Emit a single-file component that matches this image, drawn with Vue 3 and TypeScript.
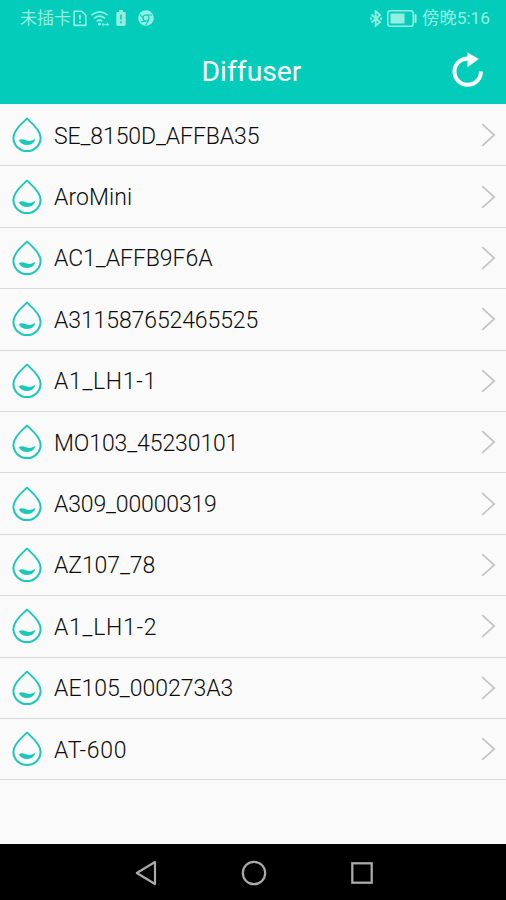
<script setup lang="ts">
interface Device {
  name: string
  spacing: number
}

const devices: Device[] = [
  { name: 'SE_8150D_AFFBA35', spacing: -0.1 },
  { name: 'AroMini', spacing: 0.1 },
  { name: 'AC1_AFFB9F6A', spacing: -0.05 },
  { name: 'A311587652465525', spacing: -0.1 },
  { name: 'A1_LH1-1', spacing: 0.65 },
  { name: 'MO103_45230101', spacing: -0.1 },
  { name: 'A309_00000319', spacing: -0.15 },
  { name: 'AZ107_78', spacing: -0.1 },
  { name: 'A1_LH1-2', spacing: 0.7 },
  { name: 'AE105_000273A3', spacing: 0 },
  { name: 'AT-600', spacing: 0.7 },
]
</script>

<template>
  <div class="screen">
    <header class="top">
      <div class="status">
        <div class="status-left">
          <span class="carrier">未插卡</span>
          <svg class="sim" width="14" height="17" viewBox="0 0 14 17">
            <path d="M1.2 1.2h7.6l4 4v10.2H1.2z" fill="none" stroke="currentColor" stroke-width="1.6" stroke-linejoin="round" />
            <path d="M7 5v4.5M7 11.3v1.8" stroke="currentColor" stroke-width="1.8" />
          </svg>
          <svg class="wifi" width="20" height="17" viewBox="0 0 20 17">
            <path d="M1.3 5.2Q9.5-1.6 17.7 5.2M4 8.3q5.5-4.4 11 0M6.7 11.3q2.8-2.2 5.6 0" fill="none" stroke="currentColor" stroke-width="1.7" />
            <circle cx="9.5" cy="14" r="1.6" fill="currentColor" />
            <path d="M12.5 14.6h6M13.8 12.8l-1.6 1.8 1.6 1.6M17 12.8l1.6 1.8-1.6 1.6" fill="none" stroke="currentColor" />
          </svg>
          <svg class="cell" width="10" height="16" viewBox="0 0 10 17">
            <path d="M3 0h4v2h1.5Q10 2 10 3.5v12Q10 17 8.5 17h-7Q0 17 0 15.5v-12Q0 2 1.5 2H3z" fill="currentColor" />
            <path d="M5 5v5M5 12v2" stroke="#04ccbb" stroke-width="1.7" />
          </svg>
          <svg class="globe" width="16" height="16" viewBox="0 0 16 16">
            <circle cx="8" cy="8" r="7.8" fill="currentColor" />
            <circle cx="8" cy="8" r="3" fill="none" stroke="#04ccbb" stroke-width="1.1" />
            <path d="M2 4.5 5 8M8 5h6M10.5 10 8 15M8 11 3 12" fill="none" stroke="#04ccbb" stroke-width="1.1" />
          </svg>
        </div>
        <div class="status-right">
          <svg class="bluetooth" width="12" height="17" viewBox="0 0 12 17">
            <path d="M1.5 4.5 10 12l-4.300 3.800V1.200L10 5l-8.500 7.500" fill="none" stroke="currentColor" stroke-width="1.8" />
            <path d="M0 8.500h2M10 8.500h2" stroke="currentColor" stroke-width="1.8" />
          </svg>
          <svg class="battery" width="31" height="17" viewBox="0 0 31 17">
            <rect x=".8" y=".8" width="25.4" height="15.4" rx="2.5" fill="none" stroke="currentColor" stroke-width="1.5" />
            <rect x="3.500" y="3.500" width="14" height="10" fill="currentColor" />
            <path d="M28.500 5v7" stroke="currentColor" stroke-width="2.2" stroke-linecap="round" />
          </svg>
          <span class="clock">傍晚5:16</span>
        </div>
      </div>
      <div class="bar">
        <h1 class="title">Diffuser</h1>
        <button class="refresh" aria-label="Refresh">
          <svg width="34" height="36" viewBox="0 0 34 36">
            <path d="M18 6.500A13.200 13.200 0 1 0 29.900 19.500" fill="none" stroke="currentColor" stroke-width="4" />
            <path d="M16.500 .5 27.800 7 16.500 15.200z" fill="currentColor" />
          </svg>
        </button>
      </div>
    </header>

    <ul class="list">
      <li v-for="device in devices" :key="device.name" class="row">
        <svg class="drop" width="30" height="36" viewBox="0 0 30 36">
          <path d="M15 1.600C11.200 5.300 1.400 12.500 1.400 20.800A13.600 13.300 0 0 0 28.600 20.800C28.600 12.500 18.800 5.300 15 1.600z" fill="none" stroke="currentColor" stroke-width="2" stroke-linejoin="round" />
          <path d="M6.800 23.200C9 21.400 11.500 22.200 14 23.200 17.500 24.600 20 24 23.300 21.800 22.800 25.500 19.500 28 15.300 28 11.200 28 8 26.400 6.800 23.200z" fill="currentColor" />
        </svg>
        <span class="name" :style="{ letterSpacing: device.spacing + 'px' }">{{ device.name }}</span>
        <svg class="chevron" width="15" height="24" viewBox="0 0 15 24">
          <path d="M1.200 1.200 13.200 12 1.200 22.800" fill="none" stroke="currentColor" stroke-width="1.700" />
        </svg>
      </li>
    </ul>

    <nav class="nav">
      <svg width="22" height="26" viewBox="0 0 22 26">
        <path d="M20 2v22L1.800 13z" fill="none" stroke="currentColor" stroke-width="2.200" stroke-linejoin="round" />
      </svg>
      <svg width="26" height="26" viewBox="0 0 26 26">
        <circle cx="13" cy="13" r="11.200" fill="none" stroke="currentColor" stroke-width="2.200" />
      </svg>
      <svg width="22" height="22" viewBox="0 0 22 22">
        <rect x="1.300" y="1.300" width="19.400" height="19.400" fill="none" stroke="currentColor" stroke-width="2.300" />
      </svg>
    </nav>
  </div>
</template>

<style>
body {
  margin: 0;
}
</style>

<style scoped>
.screen {
  box-sizing: border-box;
  width: 506px;
  height: 900px;
  display: flex;
  flex-direction: column;
  overflow: hidden;
  background: #fafafa;
  font-family: Roboto, "Noto Sans CJK SC", sans-serif;
}
.top {
  flex: none;
  height: 104px;
  background: #04ccbb;
  color: #fff;
}
.status {
  height: 36px;
  padding: 0 16px 0 20px;
  display: flex;
  align-items: center;
  justify-content: space-between;
  color: #93eee2;
  font-size: 17px;
  line-height: 36px;
}
.status-left,
.status-right {
  display: flex;
  align-items: center;
}
.sim {
  margin-left: 2px;
}
.wifi {
  margin-left: 3px;
}
.cell {
  margin-left: 6px;
}
.globe {
  margin-left: 12px;
}
.battery {
  margin-left: 5px;
}
.clock {
  margin-left: 4px;
  font-size: 17.3px;
}
.bar {
  display: grid;
  grid-template-columns: 1fr auto 1fr;
  align-items: center;
  height: 68px;
  padding-right: 21px;
}
.title {
  grid-column: 2;
  margin: 0;
  padding: 3px 0 0 18px;
  font-size: 28.3px;
  font-weight: 400;
  line-height: 40px;
}
.refresh {
  justify-self: end;
  display: flex;
  padding: 0;
  border: 0;
  background: none;
  color: inherit;
}
.list {
  flex: 1;
  margin: 0;
  padding: 1px 0 0;
  list-style: none;
}
.row {
  box-sizing: border-box;
  height: 61.4px;
  padding: 0 10px 0 12px;
  display: flex;
  align-items: center;
  border-bottom: 1px solid #d8d8d8;
}
.drop {
  flex: none;
  color: #1cc9b8;
}
.name {
  flex: 1;
  margin-left: 12px;
  padding-top: 3px;
  color: #0c0c0c;
  font-size: 23px;
  font-weight: 300;
  line-height: 30px;
  white-space: nowrap;
}
.chevron {
  flex: none;
  color: #c4c4c4;
}
.nav {
  box-sizing: border-box;
  flex: none;
  height: 56px;
  padding: 1px 0 0 1px;
  display: flex;
  align-items: center;
  justify-content: center;
  gap: 84px;
  background: #000;
  color: #aaa;
}
</style>
